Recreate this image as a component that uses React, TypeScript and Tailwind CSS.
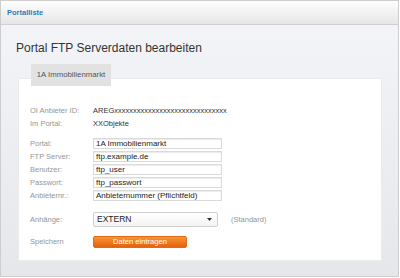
import React from "react";

const font = { fontFamily: '"Liberation Sans", Arial, sans-serif' };

const infoRows = [
  { label: "OI Anbieter ID:", value: "AREG" + "x".repeat(30) },
  { label: "Im Portal:", value: "XXObjekte" },
];

const inputRows = [
  { label: "Portal:", value: "1A Immobilienmarkt" },
  { label: "FTP Server:", value: "ftp.example.de" },
  { label: "Benutzer:", value: "ftp_user" },
  { label: "Passwort:", value: "ftp_passwort" },
  { label: "Anbieternr.:", value: "Anbieternummer (Pflichtfeld)" },
];

function Label({ children }: { children: React.ReactNode }) {
  return <div className="w-[63px] shrink-0 text-[7.5px] text-[#969696]">{children}</div>;
}

export default function App() {
  return (
    <div className="w-[400px] h-[278px] bg-white" style={font}>
      <div className="w-[399px] h-[277px] border border-[#cdcdcd] flex flex-col">
        {/* header */}
        <div className="h-[24px] shrink-0 border-b border-[#cfcfcf] bg-gradient-to-b from-[#fefefe] to-[#e6e6e6] flex items-center pl-[6px]">
          <span className="text-[7.5px] font-bold text-[#2c7cc1]">Portalliste</span>
        </div>

        {/* body */}
        <div className="flex-1 flex flex-col bg-gradient-to-b from-[#f3f4f7] to-[#e5e7eb] pt-[16px] pl-[15px] pr-[16px]">
          <h1 className="h-[14px] leading-[14px] text-[12px] text-[#333]">Portal FTP Serverdaten bearbeiten</h1>

          <div className="relative z-10 mt-[9px] ml-[15px] w-[80px] h-[22px] bg-[#e2e2e2] flex items-center justify-center text-[7.8px] text-[#555]">
            1A Immobilienmarkt
          </div>

          <div className="-mt-[8px] ml-[2px] h-[183px] bg-white border border-[#ebebeb] pt-[25px] pl-[11px]">
            <div className="flex flex-col">
              {infoRows.map((r) => (
                <div key={r.label} className="flex items-center h-[13px]">
                  <Label>{r.label}</Label>
                  <div className="text-[7.5px] text-[#333]">{r.value}</div>
                </div>
              ))}
            </div>

            <div className="flex flex-col gap-[2px] mt-[8px]">
              {inputRows.map((r) => (
                <div key={r.label} className="flex items-center h-[11px]">
                  <Label>{r.label}</Label>
                  <input
                    readOnly
                    value={r.value}
                    className="w-[129px] h-[11px] border border-[#dadada] shadow-[inset_0_1px_1px_rgba(0,0,0,0.08)] bg-white px-[2px] text-[8px] text-[#222] outline-none"
                  />
                </div>
              ))}
            </div>

            <div className="flex items-center h-[15px] mt-[11px]">
              <Label>Anhänge:</Label>
              <div className="w-[125px] h-[15px] border border-[#cfcfcf] rounded-[2px] bg-gradient-to-b from-white to-[#f4f4f4] flex items-center justify-between pl-[3px] pr-[5px]">
                <span className="text-[8.5px] text-[#222]">EXTERN</span>
                <svg width="5" height="3" viewBox="0 0 5 3">
                  <path d="M0 0h5L2.5 3z" fill="#333" />
                </svg>
              </div>
              <span className="ml-[13px] text-[7.5px] text-[#969696]">(Standard)</span>
            </div>

            <div className="flex items-center h-[12px] mt-[9px]">
              <Label>Speichern</Label>
              <button className="w-[94px] h-[12px] rounded-[2px] bg-gradient-to-b from-[#f7952e] to-[#e5600f] border border-[#e06a1a] flex items-center justify-center text-[7.6px] text-white">
                Daten eintragen
              </button>
            </div>
          </div>
        </div>
      </div>
    </div>
  );
}
